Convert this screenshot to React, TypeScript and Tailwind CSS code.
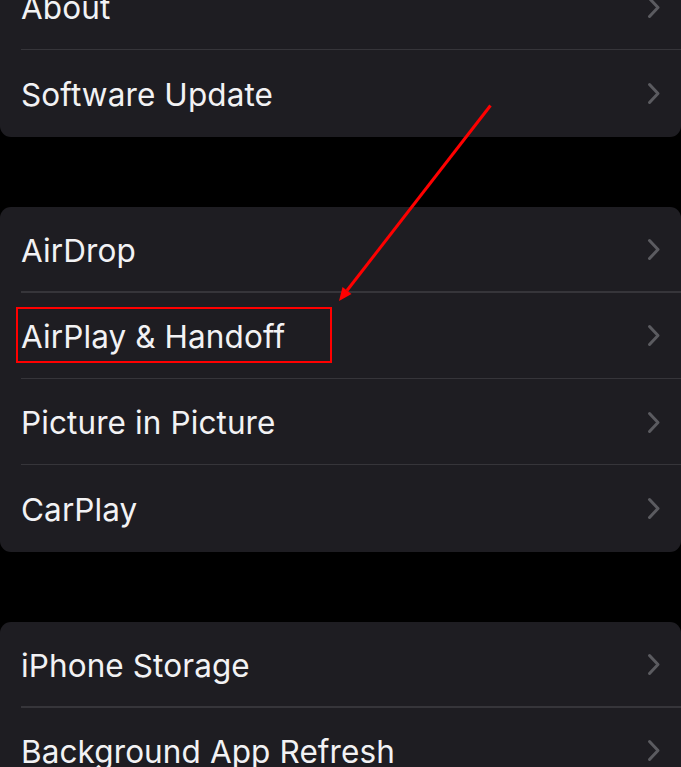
import React from "react";

type Group = string[];

const groups: { items: Group; className: string }[] = [
  { items: ["About", "Software Update"], className: "-mt-[36px]" },
  { items: ["AirDrop", "AirPlay & Handoff", "Picture in Picture", "CarPlay"], className: "" },
  { items: ["iPhone Storage", "Background App Refresh"], className: "" },
];

function Chevron() {
  return (
    <svg width="14" height="23" viewBox="0 0 14 23" className="shrink-0">
      <polyline
        points="2.5,2.5 11,11.5 2.5,20.5"
        fill="none"
        stroke="#5b5b60"
        strokeWidth="3"
        strokeLinecap="round"
        strokeLinejoin="round"
      />
    </svg>
  );
}

function Row({ label, last }: { label: string; last: boolean }) {
  return (
    <div className="relative flex h-[86.25px] items-center justify-between pl-[21px] pr-[20px]">
      <span className="pt-[2px] text-[31.5px] leading-none tracking-[0.1px] text-[#f2f2f4]">{label}</span>
      <Chevron />
      {!last && <div className="absolute bottom-0 left-[21px] right-0 h-[1.5px] bg-[#36353a]" />}
    </div>
  );
}

export default function App() {
  return (
    <div
      className="relative h-[767px] w-[681px] overflow-hidden bg-black"
      style={{ fontFamily: "Inter, 'Noto Sans', sans-serif" }}
    >
      <div className="flex flex-col gap-[70px]">
        {groups.map((g, i) => (
          <div key={i} className={`rounded-[11px] bg-[#1e1d22] ${g.className}`}>
            {g.items.map((label, j) => (
              <Row key={label} label={label} last={j === g.items.length - 1} />
            ))}
          </div>
        ))}
      </div>

      {/* annotation: highlight box + arrow */}
      <div className="pointer-events-none absolute left-[16px] top-[307px] h-[56px] w-[316px] border-2 border-[#ff0000]" />
      <svg
        className="pointer-events-none absolute left-0 top-0"
        width="681"
        height="767"
        viewBox="0 0 681 767"
      >
        <line x1="490.5" y1="105.5" x2="347" y2="290.5" stroke="#ff0000" strokeWidth="3" />
        <polygon points="339,301 351.5,294 342.5,287" fill="#ff0000" />
      </svg>
    </div>
  );
}
